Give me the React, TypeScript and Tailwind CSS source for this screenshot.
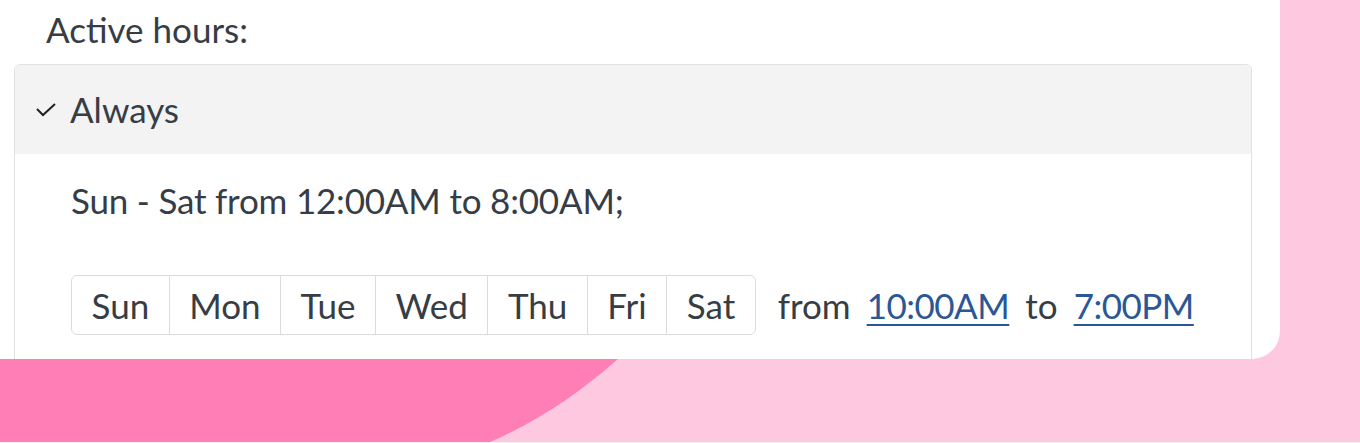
import React from "react";

const days = ["Sun", "Mon", "Tue", "Wed", "Thu", "Fri", "Sat"];

export default function App() {
  return (
    <div
      className="relative w-[1360px] h-[443px] overflow-hidden bg-[#fec8e0]"
      style={{ fontFamily: "Lato, 'Noto Sans', sans-serif" }}
    >
      <svg
        className="absolute left-0 top-0"
        width="1360"
        height="443"
        viewBox="0 0 1360 443"
      >
        <path d="M0 359 L618 359 C578 394 540 420 490 442 L0 442 Z" fill="#ff7eb6" />
        <rect x="0" y="442" width="1360" height="1" fill="#fdf1f6" />
      </svg>
      <div className="relative w-[1280px] h-[359px] bg-white rounded-br-[28px] overflow-hidden text-[#363d45] text-[35px] leading-none">
        <div className="h-[64px] pl-[46px] flex items-center pb-[6px]">Active hours:</div>
        <div className="ml-[14px] w-[1238px] h-[320px] border border-[#e2e2e2] rounded-t-[6px]">
          <div className="h-[89px] bg-[#f3f3f3] flex items-center pl-[20px] rounded-t-[5px]">
            <svg width="22" height="18" viewBox="0 0 22 18" className="mr-[13px]">
              <path d="M2 8 L8 14 L20 3" fill="none" stroke="#222" strokeWidth="2" />
            </svg>
            <span>Always</span>
          </div>
          <div className="pl-[56px]">
            <div className="h-[92px] flex items-center tracking-[-0.2px]">Sun - Sat from 12:00AM to 8:00AM;</div>
            <div className="mt-[29px] flex items-center">
              <div className="flex h-[60px] border border-[#dcdcdc] rounded-[6px]">
                {days.map((d, i) => (
                  <div
                    key={d}
                    className={
                      "flex items-center px-[19.5px] " + (i > 0 ? "border-l border-[#dcdcdc]" : "")
                    }
                  >
                    {d}
                  </div>
                ))}
              </div>
              <div className="ml-[22px] flex items-center gap-[16px]">
                <span>from</span>
                <span className="text-[#2b5797] underline decoration-2 underline-offset-[5px] tracking-[-0.5px]">10:00AM</span>
                <span>to</span>
                <span className="text-[#2b5797] underline decoration-2 underline-offset-[5px] tracking-[-0.5px]">7:00PM</span>
              </div>
            </div>
          </div>
        </div>
      </div>
    </div>
  );
}
